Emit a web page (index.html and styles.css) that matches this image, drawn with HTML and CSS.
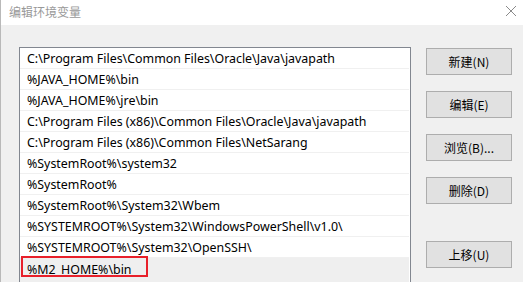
FILE: index.html
```html
<!DOCTYPE html>
<html lang="zh-CN">
<head>
  <meta charset="UTF-8" />
  <title>编辑环境变量</title>
  <link rel="stylesheet" href="styles.css">
</head>
<body>
  <div class="env-window">
    <div class="title-bar">
      <span class="title-text">编辑环境变量</span>
      <svg class="close-icon" width="12" height="12" viewBox="0 0 12 12">
        <path d="M1 1 L11 11 M11 1 L1 11" stroke="#8a8a8a" stroke-width="1" fill="none"/>
      </svg>
    </div>

    <div class="window-body">
      <div class="path-list">
        <div class="path-row">C:\Program Files\Common Files\Oracle\Java\javapath</div>
        <div class="path-row">%JAVA_HOME%\bin</div>
        <div class="path-row">%JAVA_HOME%\jre\bin</div>
        <div class="path-row">C:\Program Files (x86)\Common Files\Oracle\Java\javapath</div>
        <div class="path-row">C:\Program Files (x86)\Common Files\NetSarang</div>
        <div class="path-row">%SystemRoot%\system32</div>
        <div class="path-row">%SystemRoot%</div>
        <div class="path-row">%SystemRoot%\System32\Wbem</div>
        <div class="path-row">%SYSTEMROOT%\System32\WindowsPowerShell\v1.0\</div>
        <div class="path-row">%SYSTEMROOT%\System32\OpenSSH\</div>
        <div class="path-row selected">%M2_HOME%\bin<span class="mark-box"></span></div>
      </div>

      <div class="side-buttons">
        <button class="win-btn">新建(N)</button>
        <button class="win-btn">编辑(E)</button>
        <button class="win-btn">浏览(B)...</button>
        <button class="win-btn">删除(D)</button>
        <button class="win-btn move-up">上移(U)</button>
      </div>
    </div>
  </div>
</body>
</html>
```

FILE: styles.css
```css
body {
  margin: 0;
  font-family: "Noto Sans", "Noto Sans CJK SC", sans-serif;
  font-size: 12px;
  color: #000;
  overflow: hidden;
}

.env-window {
  width: 523px;
  height: 282px;
  display: flex;
  flex-direction: column;
  border-left: 1px solid #b9b9b9;
  box-sizing: border-box;
  overflow: hidden;
}

.title-bar {
  height: 25px;
  flex: none;
  background: #fff;
  display: flex;
  align-items: center;
  justify-content: space-between;
  padding: 0 6px 0 8px;
}

.title-text {
  color: #999;
  font-family: "Noto Sans CJK SC", sans-serif;
  font-size: 12px;
  margin-top: -2px;
}

.close-icon {
  margin-bottom: 4px;
}

.window-body {
  flex: 1;
  background: #f0f0f0;
  display: flex;
  align-items: flex-start;
  padding: 22px 0 0 18px;
}

.path-list {
  width: 392px;
  box-sizing: border-box;
  background: #fff;
  border: 1px solid #828790;
  border-bottom: none;
  padding-right: 1px;
  flex: none;
}

.path-row {
  position: relative;
  height: 20px;
  line-height: 22px;
  padding-left: 7px;
  font-size: 12.4px;
  border-bottom: 1px solid #f0f0f0;
  white-space: nowrap;
}

.path-row.selected {
  background: #efefef;
  height: 24px;
  line-height: 23px;
  border-bottom: none;
}

.mark-box {
  position: absolute;
  left: 1px;
  top: -2px;
  width: 127px;
  height: 21px;
  border: 2px solid #e8202a;
  box-sizing: border-box;
}

.side-buttons {
  margin-left: 15px;
  display: flex;
  flex-direction: column;
  padding-top: 1px;
}

.win-btn {
  width: 86px;
  height: 27px;
  margin-bottom: 16px;
  background: #e1e1e1;
  border: 1px solid #adadad;
  font-family: "Noto Sans CJK SC", sans-serif;
  font-size: 12px;
  color: #000;
  padding: 0;
}

.win-btn.move-up {
  margin-top: 21px;
}
```
